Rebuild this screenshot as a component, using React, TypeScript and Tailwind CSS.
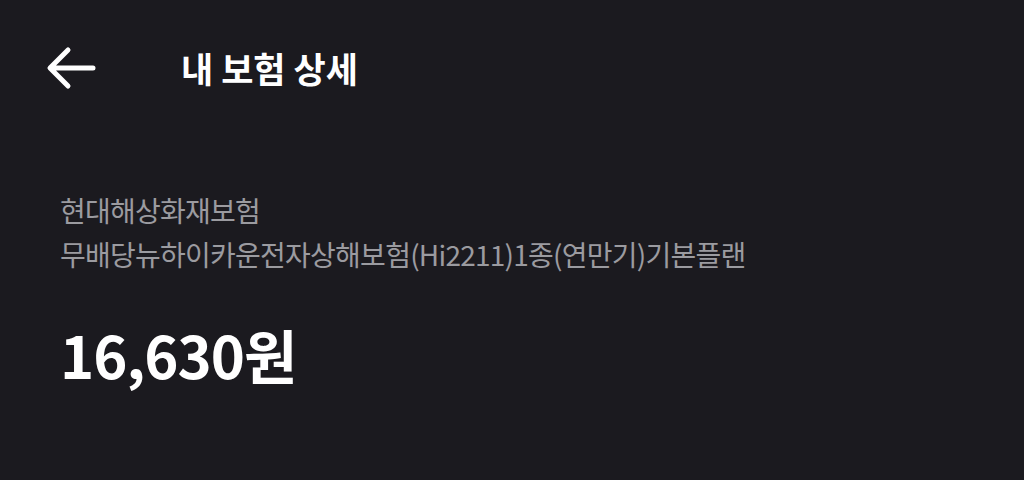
import React from 'react';

export default function App() {
  return (
    <div
      className="w-[1024px] h-[480px] bg-[#1b1a1f] text-white overflow-hidden"
      style={{ fontFamily: '"Noto Sans CJK KR", "Noto Sans", sans-serif' }}
    >
      {/* Header */}
      <div className="flex items-center h-[136px] px-[46px]">
        <button className="w-[50px] h-[50px] flex items-center justify-center">
          <svg width="50" height="44" viewBox="0 0 50 44" fill="none">
            <path
              d="M47 22H5M22 4L4 22L22 40"
              stroke="white"
              strokeWidth="5"
              strokeLinecap="round"
              strokeLinejoin="round"
            />
          </svg>
        </button>
        <h1 className="ml-[85px] text-[35px] font-bold">내 보험 상세</h1>
      </div>

      {/* Product */}
      <div className="px-[60px] mt-[52px]">
        <p className="text-[28px] leading-[44px] text-[#9b9ba0] tracking-[-0.75px]">현대해상화재보험</p>
        <p className="text-[28px] leading-[44px] text-[#9b9ba0] tracking-[-0.75px]">
          무배당뉴하이카운전자상해보험(Hi2211)1종(연만기)기본플랜
        </p>
        <p className="mt-[48px] text-[58px] leading-[60px] font-bold tracking-[-1px]">16,630원</p>
      </div>
    </div>
  );
}
